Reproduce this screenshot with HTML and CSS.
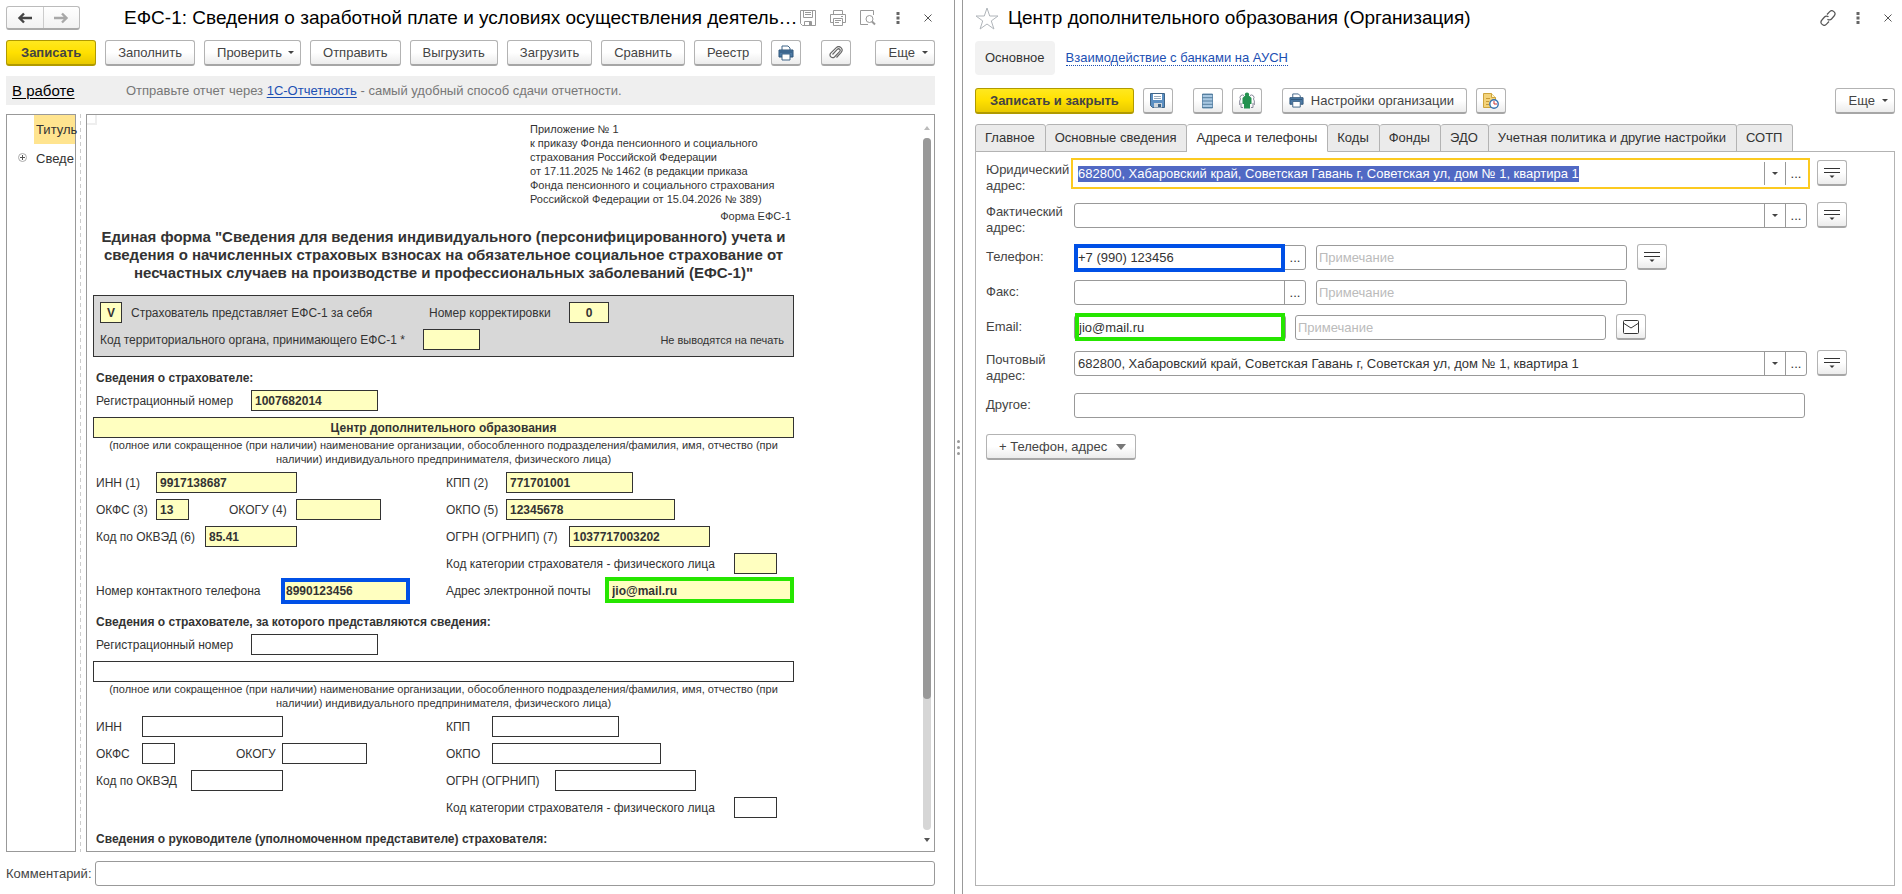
FILE: index.html
```html
<!DOCTYPE html>
<html lang="ru">
<head>
<meta charset="utf-8">
<title>ЕФС-1</title>
<link rel="stylesheet" href="styles.css">
</head>
<body>
<svg class="defs" aria-hidden="true">
  <symbol id="i-print" viewBox="0 0 16 16"><path d="M4 5V1h6l2 2v2" fill="#fff" stroke="#3f6487"/><path d="M1 5h14v7H1z" fill="#4d7ba6" stroke="#2f5478"/><path d="M4 9h8v6H4z" fill="#fff" stroke="#3f6487"/><path d="M2 7h12" stroke="#2f5478"/></symbol>
  <symbol id="i-lines" viewBox="0 0 16 14"><path d="M0 2.5h16M0 6.5h16" stroke="#333"/><path d="M5.500 9.500h5L8 12z" fill="#333"/></symbol>
  <symbol id="i-dots" viewBox="0 0 4 12"><path d="M.5 0h3v3h-3zM.5 4.500h3v3h-3zM.5 9h3v3h-3z" fill="#666"/></symbol>
  <symbol id="i-close" viewBox="0 0 8 8"><path d="M.5.5l7 7M7.500.5l-7 7" stroke="#555" fill="none"/></symbol>
</svg>
<div class="app">
  <section class="pane pane-report">
    <header class="head">
      <div class="history">
        <button type="button" aria-label="Назад"><svg width="16" height="12" viewBox="0 0 16 12"><path d="M15 6H3M7 1.500L2.500 6 7 10.500" fill="none" stroke="#444" stroke-width="2.400"/></svg></button>
        <button type="button" aria-label="Вперед"><svg width="16" height="12" viewBox="0 0 16 12"><path d="M1 6h12M9 1.500L13.500 6 9 10.500" fill="none" stroke="#a8a8a8" stroke-width="2.400"/></svg></button>
      </div>
      <h1 class="title title-report">ЕФС-1: Сведения о заработной плате и условиях осуществления деятель…</h1>
      <div class="winbtns">
        <button type="button" aria-label="Сохранить"><svg width="16" height="16" viewBox="0 0 16 16" fill="none" stroke="#999"><path d="M.5.5h15v15h-13l-2-2zM3.500.500v7h9v-7M5 2.500h6M5 4.500h6M4.500 15.500v-4h7v4"/><path d="M9 12h2v3H9z" fill="#999" stroke="none"/></svg></button>
        <button type="button" aria-label="Печать"><svg width="16" height="16" viewBox="0 0 16 16" fill="none" stroke="#999"><path d="M3.500 4.500v-4h9v4M3.500 12.500h-3v-8h15v8h-3M3.500 8.500h9v7h-9zM5 10.500h6M5 12.500h4M11 6.500h2"/></svg></button>
        <button type="button" aria-label="Просмотр"><svg width="16" height="16" viewBox="0 0 16 16" fill="none" stroke="#999"><path d="M13.500 5V.5H.5v14H8"/><circle cx="9.500" cy="9" r="3.500"/><path d="M12 11.500l3 3" stroke-width="2"/></svg></button>
        <button type="button" aria-label="Еще"><svg width="4" height="12"><use href="#i-dots"/></svg></button>
        <button type="button" aria-label="Закрыть"><svg width="8" height="8"><use href="#i-close"/></svg></button>
      </div>
    </header>
    <div class="bar bar-report">
      <button type="button" class="btn btn-main">Записать</button>
      <button type="button" class="btn">Заполнить</button>
      <button type="button" class="btn btn-drop">Проверить</button>
      <button type="button" class="btn">Отправить</button>
      <button type="button" class="btn">Выгрузить</button>
      <button type="button" class="btn">Загрузить</button>
      <button type="button" class="btn">Сравнить</button>
      <button type="button" class="btn">Реестр</button>
      <button type="button" class="btn btn-icon" aria-label="Печать"><svg width="16" height="16"><use href="#i-print"/></svg></button>
      <button type="button" class="btn btn-icon apart" aria-label="Файлы"><svg width="14" height="14" viewBox="0 0 14 14"><path d="M3.500 8.500L8.500 3.200a1.600 1.600 0 0 1 2.300 2.200L5.500 11A2.700 2.700 0 0 1 1.700 7.200L7.300 1.600a3.400 3.400 0 0 1 4.900 4.700L7.500 11.500" fill="none" stroke="#666" stroke-width="1.200"/></svg></button>
      <button type="button" class="btn btn-drop last">Еще</button>
    </div>
    <div class="notice">
      <a href="#" class="state">В работе</a>
      <p>Отправьте отчет через <a href="#">1С-Отчетность</a> - самый удобный способ сдачи отчетности.</p>
    </div>
    <div class="work">
      <ul class="tree">
        <li><span class="node current">Титуль</span></li>
        <li><svg class="plus" width="9" height="9" viewBox="0 0 9 9"><circle cx="4.500" cy="4.500" r="4" fill="#fff" stroke="#aaa"/><path d="M2 4.500h5M4.500 2v5" stroke="#555"/></svg><span class="node">Сведе</span></li>
      </ul>
      <div class="grip"></div>
      <div class="doc">
        <form class="sheet">
          <div class="corner"></div>
          <p class="appendix">Приложение № 1<br>к приказу Фонда пенсионного и социального<br>страхования Российской Федерации<br>от 17.11.2025 № 1462 (в редакции приказа<br>Фонда пенсионного и социального страхования<br>Российской Федерации от 15.04.2026 № 389)</p>
          <p class="formname">Форма ЕФС-1</p>
          <h2>Единая форма "Сведения для ведения индивидуального (персонифицированного) учета и<br>сведения о начисленных страховых взносах на обязательное социальное страхование от<br>несчастных случаев на производстве и профессиональных заболеваний (ЕФС-1)"</h2>
          <div class="service">
            <div class="line">
              <label class="cell own"><input class="f f-22 mid" value="V"><span>Страхователь представляет ЕФС-1 за себя</span></label>
              <label class="cell"><span class="c-140">Номер корректировки</span><input class="f f-40 mid" value="0"></label>
            </div>
            <div class="line spread">
              <label class="cell"><span class="c-323">Код территориального органа, принимающего ЕФС-1 *</span><input class="f f-57"></label>
              <span class="noprint">Не выводятся на печать</span>
            </div>
          </div>

          <h3>Сведения о страхователе:</h3>
          <div class="block filled">
            <div class="line"><label class="cell"><span class="c-155">Регистрационный номер</span><input class="f f-127" value="1007682014"></label></div>
            <input class="f full mid" aria-label="Наименование" value="Центр дополнительного образования">
            <p class="hint">(полное или сокращенное (при наличии) наименование организации, обособленного подразделения/фамилия, имя, отчество (при<br>наличии) индивидуального предпринимателя, физического лица)</p>
            <div class="pair">
              <div class="line"><label class="cell"><span class="c-60">ИНН (1)</span><input class="f f-141" value="9917138687"></label></div>
              <div class="line"><label class="cell"><span class="c-60">КПП (2)</span><input class="f f-127" value="771701001"></label></div>
              <div class="line"><label class="cell"><span class="c-60">ОКФС (3)</span><input class="f f-33" value="13"></label><label class="cell okogu"><span class="c-67">ОКОГУ (4)</span><input class="f f-85"></label></div>
              <div class="line"><label class="cell"><span class="c-60">ОКПО (5)</span><input class="f f-169" value="12345678"></label></div>
              <div class="line"><label class="cell"><span class="c-109">Код по ОКВЭД (6)</span><input class="f f-92" value="85.41"></label></div>
              <div class="line"><label class="cell"><span class="c-123">ОГРН (ОГРНИП) (7)</span><input class="f f-141" value="1037717003202"></label></div>
              <div class="line"></div>
              <div class="line"><label class="cell"><span class="c-288">Код категории страхователя - физического лица</span><input class="f f-43"></label></div>
              <div class="line"><label class="cell"><span class="c-186">Номер контактного телефона</span><span class="mark mark-blue"><input class="f f-127" value="8990123456"></span></label></div>
              <div class="line"><label class="cell"><span class="c-159">Адрес электронной почты</span><span class="mark mark-green"><input class="f f-189" value="jio@mail.ru"></span></label></div>
            </div>
          </div>

          <h3>Сведения о страхователе, за которого представляются сведения:</h3>
          <div class="block">
            <div class="line"><label class="cell"><span class="c-155">Регистрационный номер</span><input class="f f-127"></label></div>
            <input class="f full mid" aria-label="Наименование">
            <p class="hint">(полное или сокращенное (при наличии) наименование организации, обособленного подразделения/фамилия, имя, отчество (при<br>наличии) индивидуального предпринимателя, физического лица)</p>
            <div class="pair">
              <div class="line"><label class="cell"><span class="c-46">ИНН</span><input class="f f-141"></label></div>
              <div class="line"><label class="cell"><span class="c-46">КПП</span><input class="f f-127"></label></div>
              <div class="line"><label class="cell"><span class="c-46">ОКФС</span><input class="f f-33"></label><label class="cell okogu-b"><span class="c-46">ОКОГУ</span><input class="f f-85"></label></div>
              <div class="line"><label class="cell"><span class="c-46">ОКПО</span><input class="f f-169"></label></div>
              <div class="line"><label class="cell"><span class="c-95">Код по ОКВЭД</span><input class="f f-92"></label></div>
              <div class="line"><label class="cell"><span class="c-109">ОГРН (ОГРНИП)</span><input class="f f-141"></label></div>
              <div class="line"></div>
              <div class="line"><label class="cell"><span class="c-288">Код категории страхователя - физического лица</span><input class="f f-43"></label></div>
            </div>
          </div>

          <h3>Сведения о руководителе (уполномоченном представителе) страхователя:</h3>
        </form>
        <div class="scroll">
          <svg width="6" height="4" viewBox="0 0 6 4"><path d="M0 4h6L3 0z" fill="#bbb"/></svg>
          <div class="track"><div class="thumb"></div></div>
          <svg width="6" height="4" viewBox="0 0 6 4"><path d="M0 0h6L3 4z" fill="#555"/></svg>
        </div>
      </div>
    </div>
    <label class="comment"><span>Комментарий:</span><input class="box"></label>
  </section>

  <div class="splitter"><i></i><i></i><i></i></div>

  <section class="pane pane-org">
    <header class="head">
      <button type="button" class="star" aria-label="В избранное"><svg width="24" height="23" viewBox="0 0 24 23"><path d="M12 1l2.700 8H23l-6.700 4.900 2.600 8.100L12 17l-6.900 5 2.600-8.100L1 9h8.300z" fill="#fff" stroke="#b0b5ba"/></svg></button>
      <h1 class="title">Центр дополнительного образования (Организация)</h1>
      <div class="winbtns">
        <button type="button" aria-label="Ссылка"><svg width="16" height="16" viewBox="0 0 16 16" fill="none" stroke="#555" stroke-width="1.200"><path d="M7 4.500l2.500-2.700a3 3 0 0 1 4.600 4.200L11.500 9a2.800 2.800 0 0 1-4 .2M9 11.500l-2.500 2.700A3 3 0 0 1 1.900 10L4.500 7a2.800 2.800 0 0 1 4-.2"/></svg></button>
        <button type="button" aria-label="Еще"><svg width="4" height="12"><use href="#i-dots"/></svg></button>
        <button type="button" aria-label="Закрыть"><svg width="8" height="8"><use href="#i-close"/></svg></button>
      </div>
    </header>
    <nav class="sections"><span class="here">Основное</span><a href="#">Взаимодействие с банками на АУСН</a></nav>
    <div class="bar bar-org">
      <button type="button" class="btn btn-main">Записать и закрыть</button>
      <button type="button" class="btn btn-icon" aria-label="Записать"><svg width="15" height="15" viewBox="0 0 15 15"><path d="M.5.5h14v14h-12l-2-2z" fill="#5b8fc2" stroke="#3f6487"/><path d="M3 1h9v6H3z" fill="#fff"/><path d="M4 3.500h7M4 5.500h7" stroke="#9ab"/><path d="M4 10h8v4.500H4z" fill="#cfd6dc"/><path d="M8 11h3v3H8z" fill="#3f6487"/></svg></button>
      <button type="button" class="btn btn-icon apart" aria-label="Список"><svg width="11" height="16" viewBox="0 0 11 16"><path d="M.5 1h10v14H.5z" fill="#a9c8e2" stroke="#6c93b5"/><path d="M0 1.500h11M0 4.700h11M0 8h11M0 11.300h11M0 14.500h11" stroke="#557f9f"/></svg></button>
      <button type="button" class="btn btn-icon" aria-label="Структура"><svg width="16" height="17" viewBox="0 0 16 17"><path d="M5 3.500a2.500 2.500 0 0 0-3.500 3.500L.7 9v4M2 11v4.500h2M11 3.500a2.500 2.500 0 0 1 3.500 3.500l.8 2v4M14 11v4.500h-2" fill="none" stroke="#889"/><circle cx="8" cy="2.700" r="2.200" fill="#23914f"/><path d="M3.500 6l2-2h5l2 2v6H11v4.500H5V12H3.500z" fill="#23914f"/></svg></button>
      <button type="button" class="btn btn-with-icon apart"><svg width="15" height="15"><use href="#i-print"/></svg>Настройки организации</button>
      <button type="button" class="btn btn-icon" aria-label="История"><svg width="16" height="16" viewBox="0 0 16 16"><path d="M.5.500h8l4 4v10H.5z" fill="#f3d37b" stroke="#cda43d"/><path d="M8.500.5v4h4" fill="#fff3c8" stroke="#cda43d"/><path d="M3 5.500h4M3 8.500h3M3 11.500h3" stroke="#c99b35"/><circle cx="11" cy="11" r="4.200" fill="#fff" stroke="#3771b0" stroke-width="1.400"/><path d="M11 8v3h3" fill="none" stroke="#c33"/></svg></button>
      <button type="button" class="btn btn-drop last">Еще</button>
    </div>
    <div class="tabs" role="tablist">
      <button type="button" role="tab">Главное</button>
      <button type="button" role="tab">Основные сведения</button>
      <button type="button" role="tab" aria-selected="true">Адреса и телефоны</button>
      <button type="button" role="tab">Коды</button>
      <button type="button" role="tab">Фонды</button>
      <button type="button" role="tab">ЭДО</button>
      <button type="button" role="tab">Учетная политика и другие настройки</button>
      <button type="button" role="tab">СОТП</button>
    </div>
    <form class="panel">
      <div class="row tall">
        <label for="a1">Юридический<br>адрес:</label>
        <div class="combo wide focus"><input id="a1" value="682800, Хабаровский край, Советская Гавань г, Советская ул, дом № 1, квартира 1"><button type="button" class="arrow" aria-label="Выбрать"></button><button type="button">...</button></div>
        <button type="button" class="btn btn-icon" aria-label="Меню"><svg width="16" height="14"><use href="#i-lines"/></svg></button>
      </div>
      <div class="row tall">
        <label for="a2">Фактический<br>адрес:</label>
        <div class="combo wide"><input id="a2"><button type="button" class="arrow" aria-label="Выбрать"></button><button type="button">...</button></div>
        <button type="button" class="btn btn-icon" aria-label="Меню"><svg width="16" height="14"><use href="#i-lines"/></svg></button>
      </div>
      <div class="row">
        <label for="tel">Телефон:</label>
        <div class="combo phone"><span class="mark mark-blue"><input id="tel" value="+7 (990) 123456"></span><button type="button">...</button></div>
        <input class="box note" placeholder="Примечание" aria-label="Примечание к телефону">
        <button type="button" class="btn btn-icon" aria-label="Меню"><svg width="16" height="14"><use href="#i-lines"/></svg></button>
      </div>
      <div class="row">
        <label for="fax">Факс:</label>
        <div class="combo phone"><input id="fax"><button type="button">...</button></div>
        <input class="box note" placeholder="Примечание" aria-label="Примечание к факсу">
      </div>
      <div class="row email">
        <label for="mail">Email:</label>
        <div class="combo mail"><span class="mark mark-green"><input id="mail" value="jio@mail.ru"></span></div>
        <input class="box note" placeholder="Примечание" aria-label="Примечание к email">
        <button type="button" class="btn btn-icon" aria-label="Написать письмо"><svg width="16" height="14" viewBox="0 0 16 14"><rect x=".5" y=".5" width="15" height="13" rx="1" fill="#fff" stroke="#333"/><path d="M1 3.500l7 4.500 7-4.500" fill="none" stroke="#333"/></svg></button>
      </div>
      <div class="row tall">
        <label for="a3">Почтовый<br>адрес:</label>
        <div class="combo wide"><input id="a3" value="682800, Хабаровский край, Советская Гавань г, Советская ул, дом № 1, квартира 1"><button type="button" class="arrow" aria-label="Выбрать"></button><button type="button">...</button></div>
        <button type="button" class="btn btn-icon" aria-label="Меню"><svg width="16" height="14"><use href="#i-lines"/></svg></button>
      </div>
      <div class="row other">
        <label for="oth">Другое:</label>
        <input class="box" id="oth">
      </div>
      <button type="button" class="btn add">+ Телефон, адрес</button>
    </form>
  </section>
</div>
<script src="main.js"></script>
</body>
</html>
```

FILE: main.js
```js
const address = document.getElementById("a1");
address.focus();
address.select();
```

FILE: styles.css
```css
* { box-sizing: border-box; }
body { margin: 0; background: #fff; color: #444; font: 13px/16px "Liberation Sans", Arial, sans-serif; }
h1, h2, h3, p, ul { margin: 0; padding: 0; }
button, input { font: inherit; color: inherit; }
button { cursor: pointer; white-space: nowrap; }
svg { display: block; flex: none; }
.defs { position: absolute; width: 0; height: 0; }

.app { display: grid; grid-template-columns: minmax(0, 954fr) 9px minmax(0, 939fr); min-height: 100vh; }
.pane { display: flex; flex-direction: column; min-width: 0; padding-top: 6px; padding-bottom: 8px; }
.pane-report { padding-left: 6px; padding-right: 19px; }
.pane-org { padding-left: 12px; padding-right: 7px; }
.splitter { border: solid #999; border-width: 0 1px; display: flex; flex-direction: column; align-items: center; justify-content: center; gap: 3px; }
.splitter i { width: 3px; height: 3px; border-radius: 50%; background: #999; }

/* window header */
.head { display: flex; align-items: center; height: 24px; }
.history { flex: none; display: flex; width: 74px; height: 24px; border: 1px solid #bbb; border-bottom: 2px solid #aaa; border-radius: 3px; background: linear-gradient(#fff, #f2f2f2); }
.history button { flex: 1; display: flex; align-items: center; justify-content: center; padding: 0; border: 0; background: none; }
.history button + button { border-left: 1px solid #ccc; }
.title { flex: 1; min-width: 0; font-size: 19px; line-height: 24px; font-weight: 400; color: #000; white-space: nowrap; }
.title-report { margin-left: 44px; }
.star { margin-right: 9px; }
.star, .winbtns button { display: flex; align-items: center; justify-content: center; padding: 0; border: 0; background: none; }
.winbtns { flex: none; display: flex; align-items: center; margin-right: -8px; }
.winbtns button { width: 30px; height: 24px; }

/* command bars */
.bar { display: flex; gap: 9px; }
.bar-report { margin-top: 10px; }
.bar-org { margin-top: 13px; }
.btn { display: flex; align-items: center; justify-content: center; flex: none; height: 26px; padding: 0 12px; border: 1px solid #b3b3b3; border-bottom: 2px solid #a6a6a6; border-radius: 3px; background: linear-gradient(#fff 50%, #ececec); color: #444; }
.btn-main { padding: 0 14px; border-color: #b09a00; background: linear-gradient(#ffe81f, #ffe000 50%, #e8c900); font-weight: 700; }
.btn-icon { width: 30px; padding: 0; }
.btn-with-icon { padding: 0 12px 0 6px; gap: 7px; }
.btn-drop { padding-right: 6px; gap: 6px; }
.btn-drop.last { padding-left: 13px; gap: 7px; }
.btn-drop::after { content: ""; border: 3px solid transparent; border-top-color: #444; border-bottom: 0; }
.apart { margin-left: 11px; }
.last { margin-left: auto; }

.notice { display: flex; align-items: center; height: 29px; margin-top: 10px; padding-left: 6px; background: #efefef; color: #777; }
.notice a { color: #1c4fb3; text-decoration: underline; text-underline-offset: 2px; }
.notice .state { width: 114px; font-size: 15px; color: #000; }

/* report area */
.work { flex: 1; display: flex; margin-top: 9px; }
.tree { flex: none; width: 70px; border: 1px solid #999; list-style: none; color: #333; }
.tree li { display: flex; align-items: center; height: 29px; padding-left: 27px; position: relative; }
.node { flex: 1; min-width: 0; padding-left: 2px; line-height: 29px; white-space: nowrap; }
.node.current { background: #ffe48f; }
.plus { position: absolute; left: 11px; top: 9px; }
.grip { flex: none; width: 10px; background: repeating-linear-gradient(#ccc 0 4px, transparent 4px 7px) 4px 0 / 1px 100% no-repeat; }
.doc { flex: 1; min-width: 0; display: flex; border: 1px solid #999; overflow: hidden; }
.sheet { flex: 1; position: relative; padding: 7px 0 0 6px; overflow: hidden; font-size: 12px; color: #333; }
.corner { position: absolute; left: 0; top: 0; width: 10px; height: 10px; border: solid #eee; border-width: 0 2px 2px 0; }
.sheet > * { max-width: 701px; }
.sheet .appendix { margin-left: 437px; font-size: 11px; line-height: 14px; white-space: nowrap; }
.formname { margin-top: 3px; padding-right: 3px; font-size: 11px; line-height: 14px; text-align: right; }
h2 { margin-top: 5px; font-size: 15px; line-height: 18px; text-align: center; white-space: nowrap; }
h3 { margin: 13px 0 4px 3px; font-size: 12px; line-height: 16px; }
.service { margin-top: 13px; padding: 6px; border: 1px solid #333; background: #d8d8d8; display: flex; flex-direction: column; gap: 6px; }
.service .line { padding-left: 0; }
.line { display: flex; align-items: center; height: 21px; padding-left: 3px; }
.spread { justify-content: space-between; }
.noprint { padding-right: 3px; font-size: 11px; }
.cell { display: flex; align-items: center; white-space: nowrap; }
.own { width: 329px; gap: 9px; }
.okogu { margin-left: 40px; }
.okogu-b { margin-left: 61px; }
.f { height: 21px; padding: 0 3px; border: 1px solid #333; background: #fff; font-weight: 700; color: #333; outline: 0; }
.service .f, .filled .f { background: #ffffc0; }
.mid { text-align: center; }
.full { display: block; width: 100%; margin-top: 6px; }
.hint { margin-bottom: 6px; font-size: 11px; line-height: 14px; text-align: center; white-space: nowrap; }
.pair { display: grid; grid-template-columns: 350px 1fr; row-gap: 6px; }
.c-46 { width: 46px; } .c-60 { width: 60px; } .c-67 { width: 67px; } .c-95 { width: 95px; }
.c-109 { width: 109px; } .c-123 { width: 123px; } .c-140 { width: 140px; } .c-155 { width: 155px; }
.c-159 { width: 159px; } .c-186 { width: 186px; } .c-288 { width: 288px; } .c-323 { width: 323px; }
.f-22 { width: 22px; } .f-33 { width: 33px; } .f-40 { width: 40px; } .f-43 { width: 43px; }
.f-57 { width: 57px; } .f-85 { width: 85px; } .f-92 { width: 92px; } .f-127 { width: 127px; }
.f-141 { width: 141px; } .f-169 { width: 169px; } .f-189 { width: 189px; }

.mark { position: relative; display: flex; }
.mark::after { content: ""; position: absolute; inset: -2px -1px -3px; border: 4px solid #0050e6; pointer-events: none; }
.mark-green::after { inset: -3px 0 -2px; border-color: #26e600; }
.mark-green .f { padding-left: 6px; }

.scroll { flex: none; width: 15px; padding: 11px 0 9px; display: flex; flex-direction: column; align-items: center; gap: 8px; }
.track { flex: 1; width: 8px; border-radius: 4px; background: #d6d6d6; }
.thumb { height: 81%; border-radius: 4px; background: #999; }

.box, .combo { height: 25px; border: 1px solid #999; border-radius: 3px; background: #fff; color: #333; outline: 0; }
.box { padding: 0 2px; min-width: 0; }
.box::placeholder { color: #bbb; opacity: 1; }
.comment { display: flex; align-items: center; margin-top: 9px; }
.comment span { width: 89px; }
.comment .box { flex: 1; }

/* organisation form */
.sections { display: flex; align-items: center; margin-top: 11px; height: 34px; color: #333; }
.here { padding: 9px 10px; border-radius: 4px; background: #f2f2f2; }
.sections a { margin-left: 11px; color: #1c4fb3; text-decoration: none; border-bottom: 1px dotted #1c4fb3; line-height: 14px; }
.tabs { display: flex; margin-top: 10px; height: 28px; position: relative; margin-bottom: -1px; }
.tabs button { padding: 0 10px 0 9px; border: 1px solid #b3b3b3; border-left-width: 0; border-radius: 3px 3px 0 0; background: #ebebeb; color: #333; }
.tabs button:first-child { border-left-width: 1px; }
.tabs [aria-selected] { background: #fff; border-bottom-color: #fff; }
.panel { flex: 1; padding: 8px 47px 0 10px; border: 1px solid #b3b3b3; }
.row { display: flex; align-items: flex-start; height: 35px; }
.row.tall { height: 42px; }
.row label { flex: none; width: 88px; padding-top: 5px; line-height: 16px; white-space: nowrap; }
.row.tall label { padding-top: 2px; }
.row > .combo, .row > .box { margin-top: 1px; }
.row > .btn { margin-left: 10px; }
.combo { display: flex; align-items: stretch; position: relative; }
.combo input { flex: 1; min-width: 0; width: 100%; border: 0; padding: 0 3px; background: none; outline: 0; }
.combo .mark-green input { padding-left: 4px; }
.combo button { flex: none; width: 21px; padding: 0; border: 0; border-left: 1px solid #999; background: none; }
.combo .mark { flex: 1; }
.combo .arrow { display: flex; align-items: center; justify-content: center; }
.arrow::after { content: ""; border: 3px solid transparent; border-top-color: #444; border-bottom: 0; }
.wide { flex: 1; }
.phone { width: 232px; }
.mail { width: 212px; }
.note { width: 311px; margin-left: 10px; }
.mail + .note { margin-left: 9px; }
.focus { border-color: transparent; }
.focus::before { content: ""; position: absolute; inset: -4px; border: 2px solid #fcca20; pointer-events: none; }
.focus input::selection { background: rgba(80, 104, 196, 0.996); color: #fff; }
.row.email { height: 36px; }
.row.other { height: 42px; }
.other .box { flex: 1; margin-right: 42px; }
.add { gap: 9px; padding: 0 9px 0 12px; }
.add::after { content: ""; border: 5px solid transparent; border-top: 6px solid #777; border-bottom: 0; }
```
